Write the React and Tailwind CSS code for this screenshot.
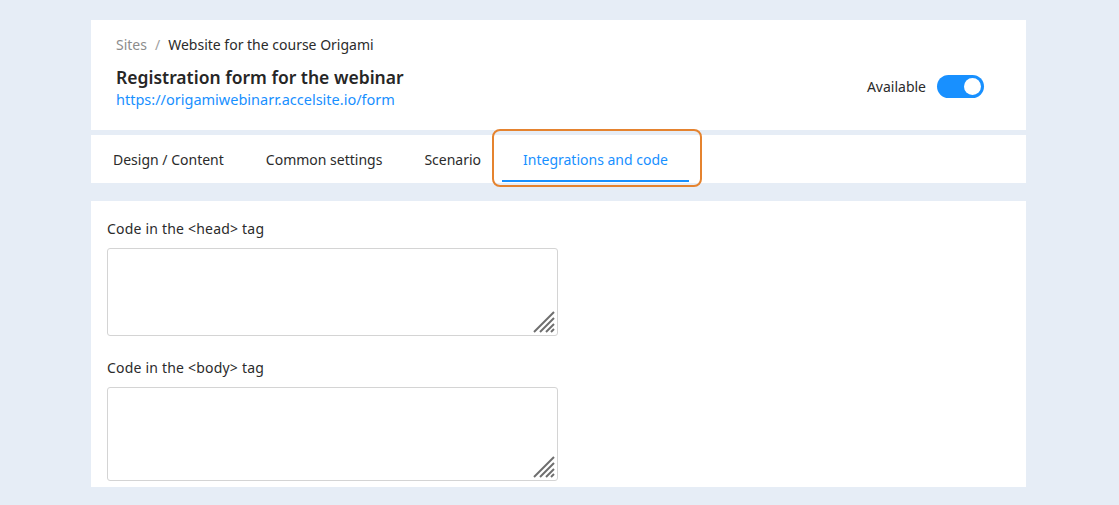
import React from "react";

const font = { fontFamily: '"Noto Sans", "Open Sans", sans-serif' };

function Toggle() {
  return (
    <div className="relative w-[47px] h-[23px] rounded-full bg-[#1890ff]">
      <div className="absolute right-[3px] top-[3px] w-[17px] h-[17px] rounded-full bg-white" />
    </div>
  );
}

function Tab({ label, active }) {
  return (
    <div className="relative h-full flex items-center px-[21px]">
      <span className={active ? "text-[#1890ff]" : "text-[#2b2b2b]"}>{label}</span>
      {active && (
        <>
          <div className="absolute left-0 right-0 bottom-[1px] h-[2px] bg-[#1890ff]" />
          <div className="absolute -left-[10px] -right-[13px] -top-[6px] -bottom-[4px] border-2 border-[#e5832f] rounded-[8px] pointer-events-none" />
        </>
      )}
    </div>
  );
}

function CodeField({ label, height }) {
  return (
    <div className="flex flex-col">
      <div className="text-[14px] text-[#2b2b2b] leading-[20px] mb-[9px] tracking-[0.2px]">{label}</div>
      <div
        className={`relative w-[451px] ${height} border border-[#d4d4d4] rounded-[3px] bg-white`}
      >
        <svg className="absolute right-[2px] bottom-[2px]" width="22" height="22" viewBox="0 0 22 22">
          <g stroke="#6e6e6e" strokeWidth="2" strokeLinecap="butt">
            <line x1="1" y1="21" x2="21" y2="1" />
            <line x1="7" y1="21" x2="21" y2="7" />
            <line x1="13" y1="21" x2="21" y2="13" />
            <line x1="18" y1="21" x2="21" y2="18" />
          </g>
        </svg>
      </div>
    </div>
  );
}

export default function App() {
  return (
    <div className="min-h-[505px] bg-[#e6edf6] pt-[20px]" style={font}>
      <div className="w-[935px] ml-[91px] flex flex-col">
        <div className="bg-white h-[110px] pl-[25px] pr-[42px] flex items-start justify-between">
          <div className="flex flex-col pt-[15px]">
            <div className="text-[14px] leading-[20px] flex items-center">
              <span className="text-[#8c8c8c]">Sites</span>
              <span className="text-[#a0a0a0] mx-[8px]">/</span>
              <span className="text-[#2b2b2b]">Website for the course Origami</span>
            </div>
            <div className="mt-[11px] text-[17.5px] font-semibold leading-[23px] text-[#262626]">
              Registration form for the webinar
            </div>
            <div className="text-[14.5px] leading-[20px] text-[#1890ff]">
              https://origamiwebinarr.accelsite.io/form
            </div>
          </div>
          <div className="flex items-center gap-[11px] mt-[55px]">
            <span className="text-[14px] text-[#2b2b2b]">Available</span>
            <Toggle />
          </div>
        </div>
        <div className="mt-[5px] bg-white h-[48px] flex items-center text-[14px] pl-[1px]">
          <Tab label="Design / Content" />
          <Tab label="Common settings" />
          <Tab label="Scenario" />
          <Tab label="Integrations and code" active />
        </div>
        <div className="mt-[18px] bg-white h-[286px] px-[16px] pt-[18px] flex flex-col gap-[22px]">
          <CodeField label="Code in the <head> tag" height="h-[88px]" />
          <CodeField label="Code in the <body> tag" height="h-[94px]" />
        </div>
      </div>
    </div>
  );
}
